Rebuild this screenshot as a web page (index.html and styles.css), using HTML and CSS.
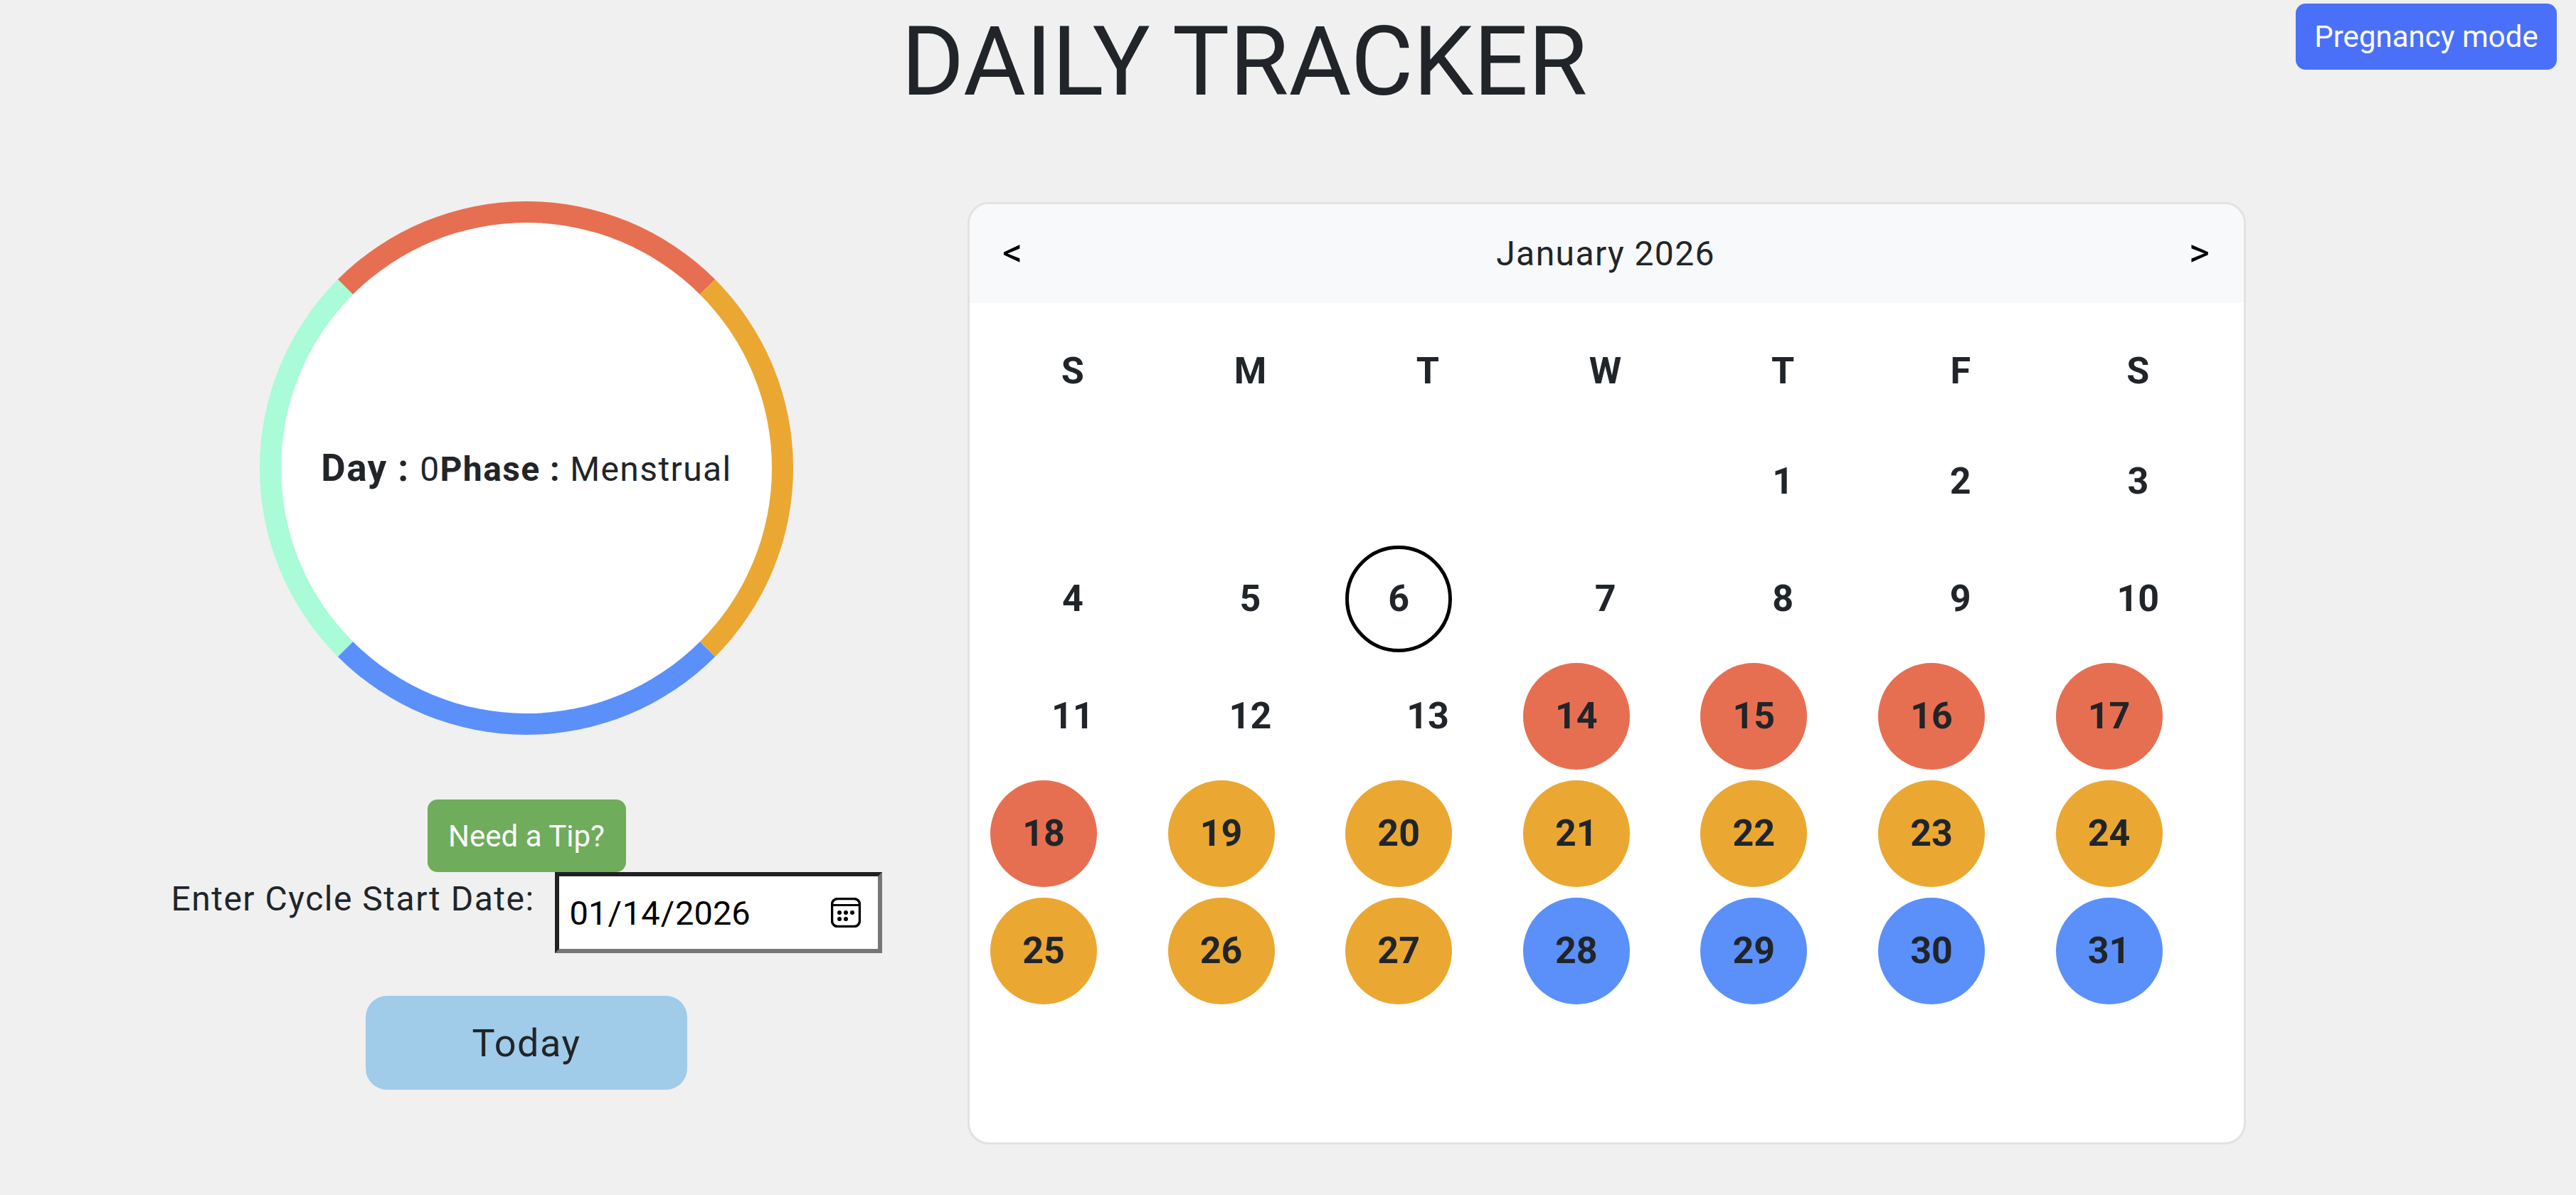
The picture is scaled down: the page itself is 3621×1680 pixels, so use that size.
FILE: index.html
```html
<!DOCTYPE html>
<html lang="en">
<head>
<meta charset="utf-8">
<title>Daily Tracker</title>
<link rel="stylesheet" href="styles.css">
</head>
<body>
<button class="mode-btn" type="button">Pregnancy mode</button>
<div class="page">
  <h1 class="title">DAILY TRACKER</h1>
  <main class="content">
    <section class="tracker">
      <div class="ring">
        <p class="ring-text"><strong class="ring-day">Day : </strong>0<strong>Phase : </strong>Menstrual</p>
      </div>
      <button class="tip-btn" type="button">Need a Tip?</button>
      <div class="date-row">
        <label class="date-label" for="start">Enter Cycle Start Date:</label>
        <div class="date-field">
          <input class="date-input" id="start" type="date" value="2026-01-14">
          <svg class="date-icon" viewBox="0 0 42 42" width="42" height="42" aria-hidden="true">
            <rect x="1.5" y="1.5" width="39" height="39" rx="8" fill="none" stroke="#000" stroke-width="3.5"/>
            <path d="M1.5 10.5H40.5" fill="none" stroke="#000" stroke-width="3"/>
            <circle cx="12" cy="21" r="3"/><circle cx="21" cy="21" r="3"/><circle cx="30" cy="21" r="3"/>
            <circle cx="12" cy="30" r="3"/><circle cx="21" cy="30" r="3"/>
          </svg>
        </div>
      </div>
      <button class="today-btn" type="button">Today</button>
    </section>
    <section class="calendar">
      <header class="cal-head">
        <span class="cal-nav">&lt;</span>
        <span class="cal-month">January 2026</span>
        <span class="cal-nav">&gt;</span>
      </header>
      <div class="cal-grid">
        <div class="cell">S</div><div class="cell">M</div><div class="cell">T</div><div class="cell">W</div><div class="cell">T</div><div class="cell">F</div><div class="cell">S</div>
        <div class="cell"></div><div class="cell"></div><div class="cell"></div><div class="cell"></div><div class="cell">1</div><div class="cell">2</div><div class="cell">3</div>
        <div class="cell">4</div><div class="cell">5</div><div class="cell"><span class="dot today">6</span></div><div class="cell">7</div><div class="cell">8</div><div class="cell">9</div><div class="cell">10</div>
        <div class="cell">11</div><div class="cell">12</div><div class="cell">13</div><div class="cell"><span class="dot red">14</span></div><div class="cell"><span class="dot red">15</span></div><div class="cell"><span class="dot red">16</span></div><div class="cell"><span class="dot red">17</span></div>
        <div class="cell"><span class="dot red">18</span></div><div class="cell"><span class="dot orange">19</span></div><div class="cell"><span class="dot orange">20</span></div><div class="cell"><span class="dot orange">21</span></div><div class="cell"><span class="dot orange">22</span></div><div class="cell"><span class="dot orange">23</span></div><div class="cell"><span class="dot orange">24</span></div>
        <div class="cell"><span class="dot orange">25</span></div><div class="cell"><span class="dot orange">26</span></div><div class="cell"><span class="dot orange">27</span></div><div class="cell"><span class="dot blue">28</span></div><div class="cell"><span class="dot blue">29</span></div><div class="cell"><span class="dot blue">30</span></div><div class="cell"><span class="dot blue">31</span></div>
      </div>
    </section>
  </main>
</div>
</body>
</html>
```
FILE: styles.css
```css
* { box-sizing: border-box; }
html, body { margin: 0; height: 100%; }
body {
  background: #f0f0f0;
  color: #212529;
  font-family: Roboto, "Liberation Sans", sans-serif;
  overflow: hidden;
}
button { font-family: inherit; border: 0; cursor: pointer; }

.mode-btn {
  position: absolute;
  top: 5px;
  right: 27px;
  width: 367px;
  height: 93px;
  border-radius: 14px;
  background: #4a70fa;
  color: #fff;
  font-size: 42px;
}

.page { width: 3504px; }
.title {
  margin: 0;
  height: 283px;
  padding: 6px 6px 0 0;
  text-align: center;
  font-size: 135px;
  font-weight: 400;
  line-height: 162px;
}

.content {
  display: grid;
  grid-template-columns: 1240px 1797px;
  padding-left: 120px;
}

.tracker {
  display: flex;
  flex-direction: column;
  align-items: center;
}
.ring {
  width: 750px;
  height: 750px;
  display: flex;
  align-items: center;
  justify-content: center;
  background: #fff;
  border-radius: 50%;
  border: 30px solid;
  border-color: #e76f51 #eaa832 #5b90fa #aafbd8;
}
.ring-text {
  margin: 0;
  font-size: 48px;
  font-weight: 400;
  letter-spacing: 1.4px;
  white-space: nowrap;
}
.ring-text strong { font-weight: 700; }
.ring-text .ring-day { font-size: 53px; }

.tip-btn {
  margin-top: 91px;
  width: 279px;
  height: 102px;
  border-radius: 14px;
  background: #6fac5b;
  color: #fff;
  font-size: 42px;
}

.date-row {
  display: flex;
  align-items: flex-start;
  gap: 28px;
}
.date-label {
  padding-top: 2px;
  font-size: 48px;
  line-height: 1.5;
  letter-spacing: 1.5px;
}
.date-field {
  position: relative;
  width: 460px;
  height: 114px;
}
.date-input {
  width: 100%;
  height: 100%;
  padding: 0 24px 0 14px;
  background: #fff;
  color: #000;
  font-family: Roboto, sans-serif;
  font-size: 47px;
  border: 6px solid;
  border-color: #212121 #767676 #767676 #212121;
  border-radius: 0;
  outline: none;
}
.date-input::-webkit-calendar-picker-indicator {
  opacity: 0;
  width: 42px;
  height: 42px;
  margin: 0;
  padding: 0;
}
.date-icon {
  position: absolute;
  top: 36px;
  right: 30px;
  pointer-events: none;
}

.today-btn {
  margin-top: 60px;
  width: 452px;
  height: 132px;
  border-radius: 30px;
  background: #a0cbe9;
  color: #212529;
  font-size: 54px;
  letter-spacing: 1.5px;
}

.calendar {
  height: 1325px;
  margin-top: 1px;
  background: #fff;
  border: 3px solid #e2e2e2;
  border-radius: 30px;
  overflow: hidden;
}
.cal-head {
  height: 139px;
  padding: 0 48px 0 46px;
  display: flex;
  align-items: center;
  justify-content: space-between;
  background: #f8f9fa;
}
.cal-month {
  font-size: 48px;
  letter-spacing: 1.4px;
}
.cal-nav {
  padding-bottom: 3px;
  color: #000;
  font-size: 56px;
  font-weight: 400;
}
.cal-grid {
  display: grid;
  grid-template-columns: repeat(7, 249.6px);
  grid-template-rows: 145px;
  grid-auto-rows: 165px;
  padding: 23px 20px 0;
}
.cell {
  display: flex;
  align-items: center;
  justify-content: center;
  font-size: 52px;
  font-weight: 700;
}
.dot {
  width: 150px;
  height: 150px;
  margin-right: auto;
  margin-left: 9px;
  display: flex;
  align-items: center;
  justify-content: center;
  border-radius: 50%;
}
.dot.today { border: 5.5px solid #000; }
.dot.red { background: #e76f51; }
.dot.orange { background: #eaa832; }
.dot.blue { background: #5b90fa; }
```
